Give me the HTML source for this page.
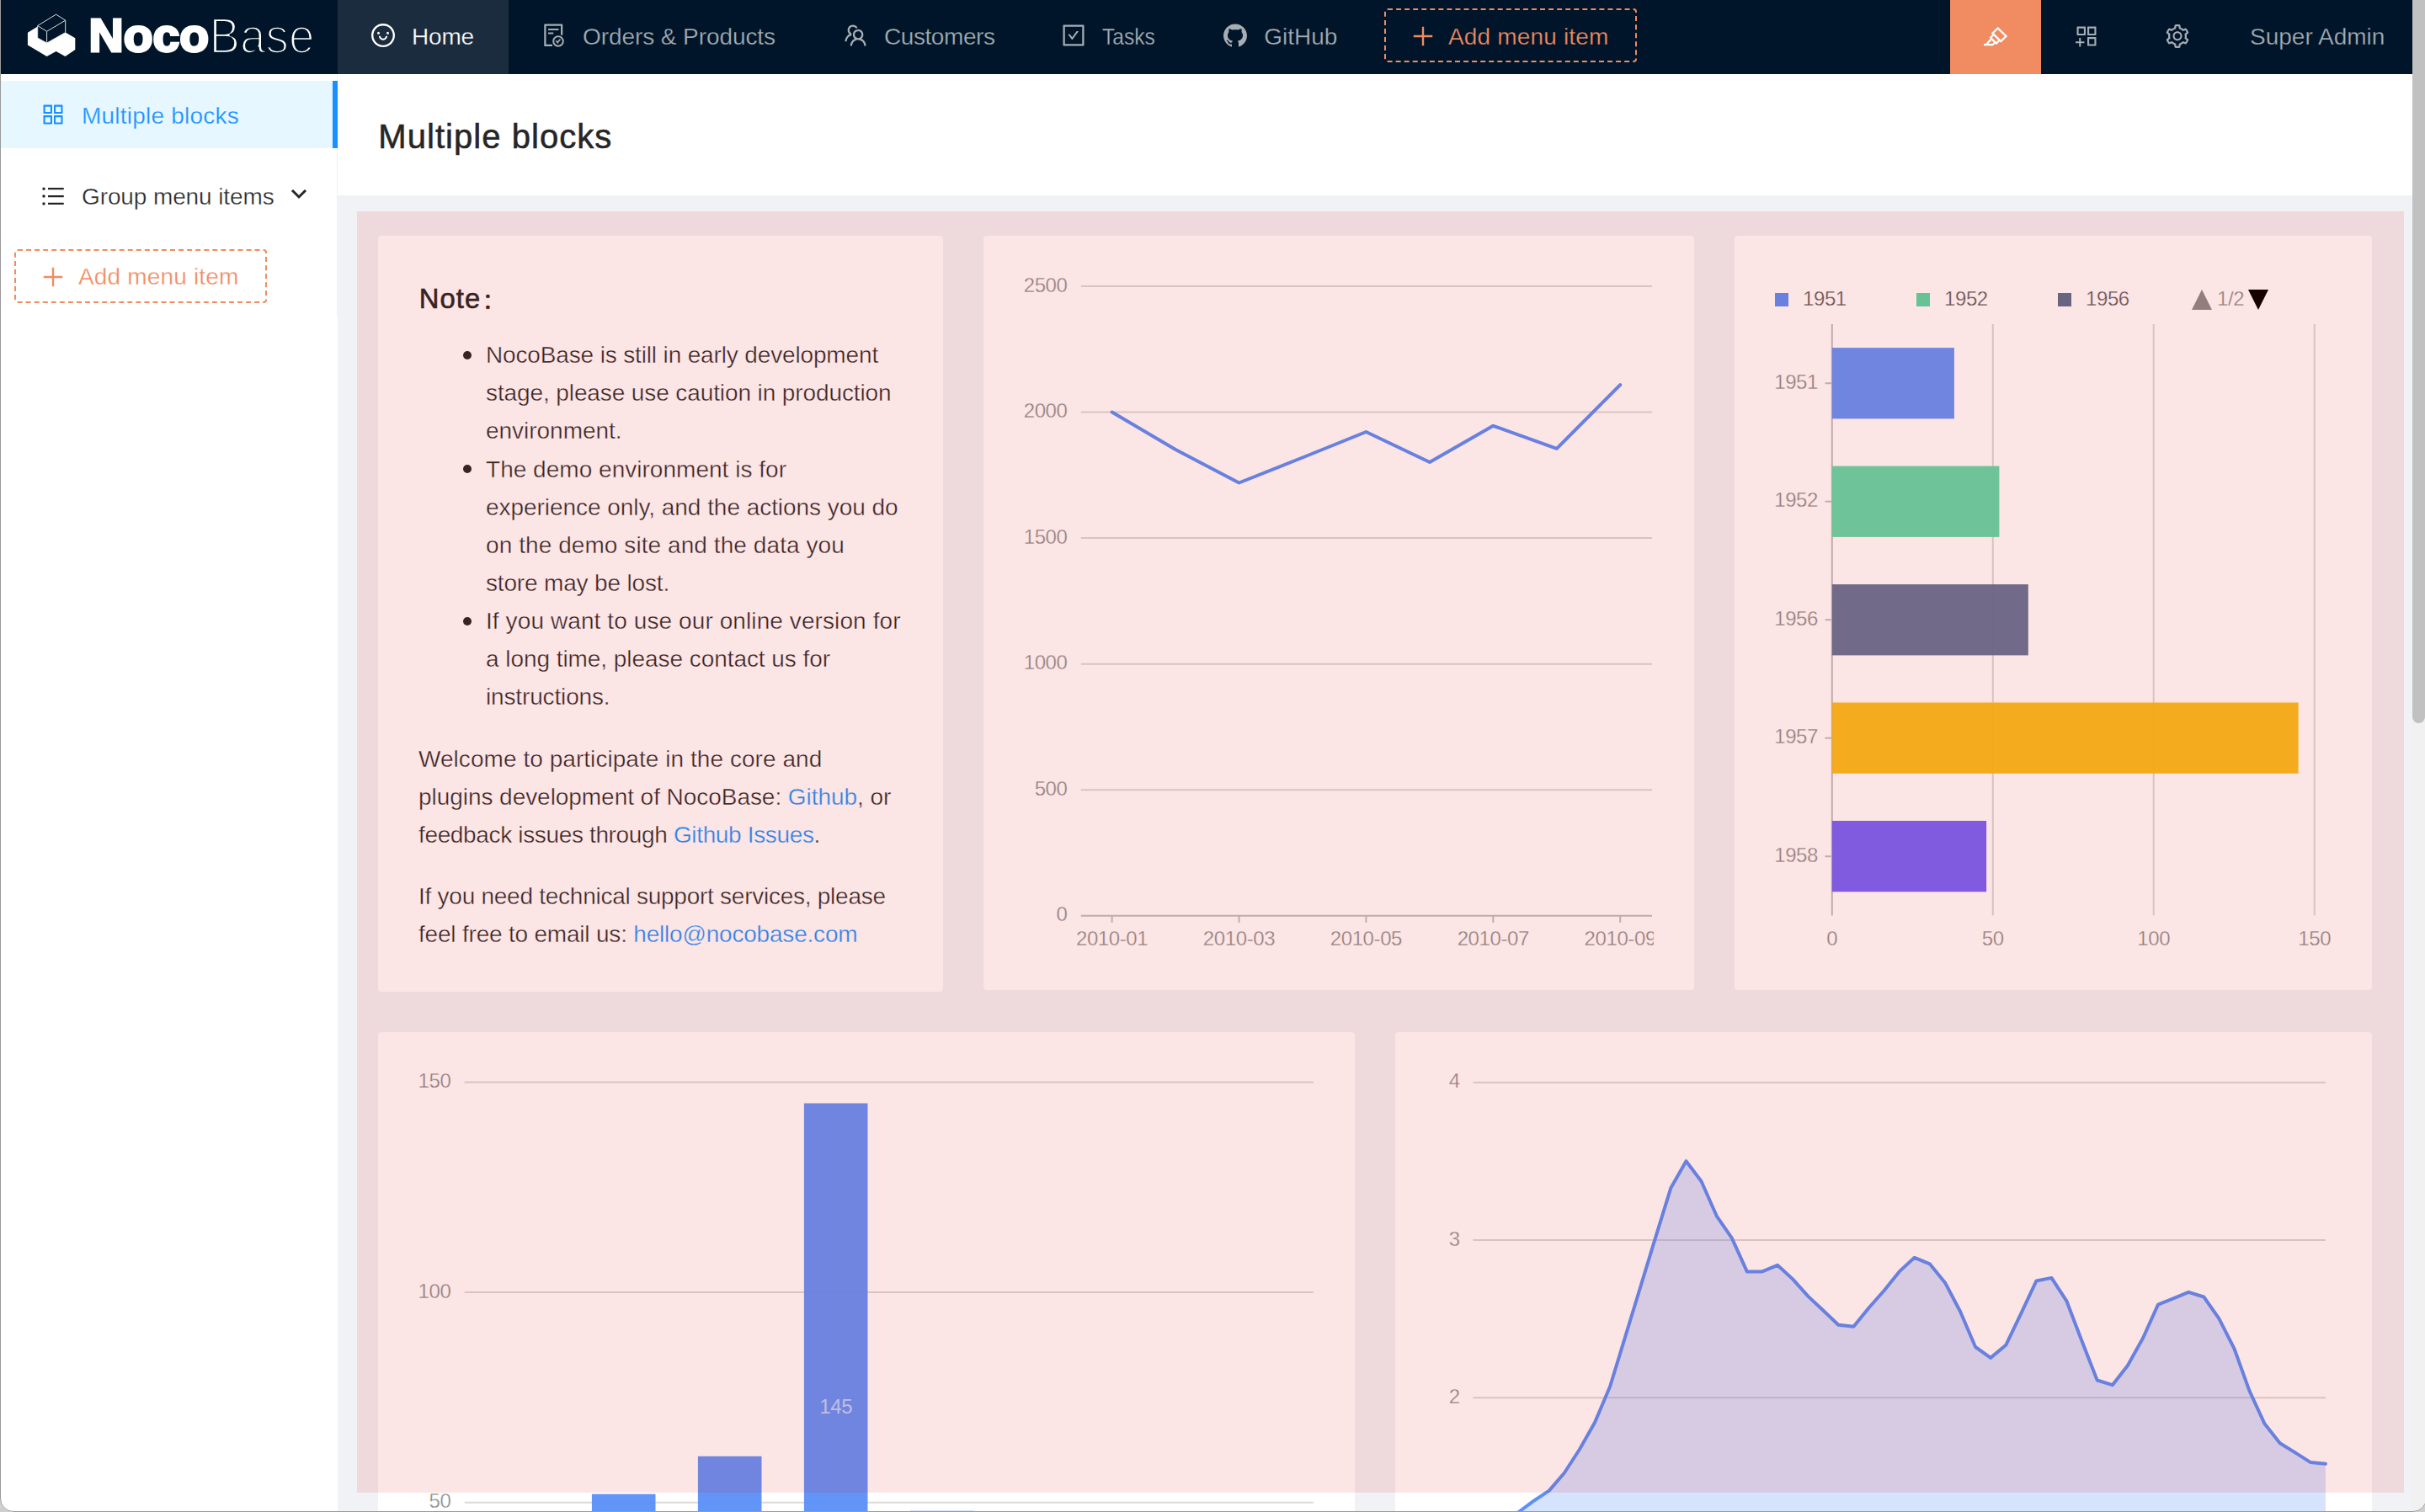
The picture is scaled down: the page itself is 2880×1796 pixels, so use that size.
<!DOCTYPE html>
<html lang="en">
<head>
<meta charset="utf-8">
<title>NocoBase</title>
<style>
html,body{margin:0;padding:0;}
body{width:2880px;height:1796px;overflow:hidden;position:relative;background:#f0f2f5;font-family:"Liberation Sans","Noto Sans CJK SC",sans-serif;font-size:28px;color:rgba(0,0,0,.85);-webkit-font-smoothing:antialiased;}
*{box-sizing:border-box;}
svg{display:block;}
.abs{position:absolute;}
/* header */
#hdr{position:absolute;left:0;top:0;width:2865px;height:88px;background:#001529;}
.mi{position:absolute;top:0;height:88px;color:#a6adb4;white-space:nowrap;}
.mi svg{position:absolute;top:28px;width:28px;height:28px;fill:currentColor;}
.mi span{-webkit-text-stroke:0.3px #001529;position:absolute;top:0;line-height:88px;font-size:28px;}
.mi.sel{background:#1a2c3e;color:#fff;}
.mi.sel span{-webkit-text-stroke:0.3px #1a2c3e;}
.addbtn{position:absolute;width:300px;height:64px;border:2px dashed #f18b62;border-radius:4px;color:#f18b62;white-space:nowrap;}
.addbtn svg{position:absolute;left:30px;top:17px;width:28px;height:28px;fill:currentColor;}
.addbtn span{position:absolute;left:74px;top:1px;line-height:60px;font-size:28px;}
/* sider */
#sider{position:absolute;left:1px;top:88px;width:400px;height:1708px;background:#fff;}
.smi{position:absolute;left:0;width:400px;height:80px;white-space:nowrap;}
.smi svg.ic{position:absolute;left:48px;top:26px;width:28px;height:28px;fill:currentColor;}
.smi span{-webkit-text-stroke:0.3px #fff;position:absolute;left:96px;top:2px;line-height:80px;font-size:28px;}
/* main */
#title{position:absolute;left:401px;top:88px;width:2464px;height:144px;background:#fff;}
#title h1{position:absolute;left:48.3px;top:2.1px;margin:0;font-size:40px;font-weight:400;line-height:144px;color:#262626;-webkit-text-stroke:0.55px #262626;white-space:nowrap;}
.card{position:absolute;background:#fff;border-radius:4px;overflow:hidden;}
.cl{stroke:#fff;stroke-width:.3px;font-size:24px;fill:#8c8c8c;font-family:"Liberation Sans",sans-serif;letter-spacing:-0.4px;}
.lg{fill:#595959;}
#ov{position:absolute;left:424px;top:251px;width:2431px;height:1522px;background:rgba(228,0,0,.1);}
/* markdown */
#md{position:absolute;left:48px;top:48px;width:600px;font-size:28px;line-height:45.14px;color:rgba(0,0,0,.85);white-space:nowrap;}
#md h3{height:54.6px;position:relative;top:0.4px;margin:0 0 16.6px 0;font-size:32.76px;font-weight:400;line-height:54.6px;letter-spacing:1.1px;padding-left:0.8px;color:#262626;-webkit-text-stroke:0.6px #262626;}
#md ul,#md p{-webkit-text-stroke:0.35px #fff;}
#md ul{margin:0 0 28px 0;padding:0 0 0 80px;list-style:none;}
#md li{position:relative;}
#md li:before{content:"";position:absolute;left:-27.2px;top:17.4px;width:10.4px;height:10.4px;border-radius:50%;background:rgba(0,0,0,.85);}
#md p{margin:0 0 28px 0;}
#md a{color:#1890ff;text-decoration:none;}
.ln{display:inline-block;}
</style>
</head>
<body>
<!-- HEADER -->
<div id="hdr">
<svg class="abs" style="left:0;top:0" width="401" height="88" viewBox="0 0 401 88">
<polygon fill="#fff" points="32.9,38.8 44.7,31.6 44.7,45 55.6,51.1 77.7,38.6 89.3,45.2 89.3,59 77.5,67 66.6,60.9 55.6,67 32.9,53.4"/>
<g fill="none" stroke="#d8dce0" stroke-width="1" stroke-linejoin="round"><polygon points="44.7,30.5 66.6,17.1 77.7,24.2 77.7,38.6 55.6,51.1 44.7,45"/><polyline points="44.7,30.5 55.6,37.3 77.7,24.2"/><line x1="55.6" y1="37.3" x2="55.6" y2="51.1"/></g>
<text x="105.5" y="60.6" font-family="Liberation Sans, sans-serif" font-weight="700" font-size="56" fill="#fff" stroke="#fff" stroke-width="3" textLength="142.5" lengthAdjust="spacingAndGlyphs">Noco</text>
<text x="248.5" y="63.2" font-family="Liberation Sans, sans-serif" font-weight="400" font-size="60" fill="#fff" stroke="#001529" stroke-width="2.7" textLength="125" lengthAdjust="spacingAndGlyphs">Base</text>
</svg>
<div class="mi sel" style="left:401px;width:203px"><svg style="left:40px" viewBox="64 64 896 896"><path d="M288 421a48 48 0 1096 0 48 48 0 10-96 0zm352 0a48 48 0 1096 0 48 48 0 10-96 0zM512 64C264.600 64 64 264.600 64 512s200.600 448 448 448 448-200.600 448-448S759.400 64 512 64zm263 711c-34.200 34.200-74 61-118.300 79.800C611 874.200 562.300 884 512 884c-50.300 0-99-9.800-144.800-29.200A370.400 370.400 0 01248.900 775c-34.200-34.200-61-74-79.800-118.300C149.800 611 140 562.300 140 512s9.800-99 29.200-144.800A370.400 370.400 0 01249 248.900c34.200-34.200 74-61 118.300-79.800C413 149.800 461.700 140 512 140c50.300 0 99 9.800 144.800 29.200A370.400 370.400 0 01775.100 249c34.200 34.200 61 74 79.800 118.300C874.200 413 884 461.700 884 512s-9.800 99-29.200 144.800A368.890 368.890 0 01775 775zM664 533h-48.100c-4.200 0-7.800 3.200-8.100 7.400C604 589.900 562.500 629 512 629s-92.100-39.100-95.800-88.600c-.3-4.200-3.900-7.400-8.100-7.400H360a8 8 0 00-8 8.400c4.400 84.300 74.500 151.600 160 151.600s155.600-67.300 160-151.600a8 8 0 00-8-8.400z"/></svg><span style="left:88px;letter-spacing:-0.18px">Home</span></div>
<div class="mi" style="left:604px;width:358px"><svg style="left:40px" viewBox="64 64 896 896"><path d="M688 312v-48c0-4.400-3.600-8-8-8H296c-4.400 0-8 3.600-8 8v48c0 4.400 3.600 8 8 8h384c4.400 0 8-3.600 8-8zm-392 88c-4.400 0-8 3.600-8 8v48c0 4.400 3.600 8 8 8h184c4.400 0 8-3.600 8-8v-48c0-4.400-3.600-8-8-8H296zm376 116c-119.300 0-216 96.700-216 216s96.700 216 216 216 216-96.700 216-216-96.700-216-216-216zm107.500 323.500C750.800 868.200 712.600 884 672 884s-78.800-15.800-107.500-44.500C535.800 810.800 520 772.600 520 732s15.800-78.800 44.500-107.500C593.200 595.800 631.400 580 672 580s78.800 15.800 107.500 44.500C808.200 653.200 824 691.400 824 732s-15.800 78.800-44.500 107.500zM761 656h-44.300c-2.600 0-5 1.200-6.500 3.300l-63.500 87.800-23.100-31.900a7.920 7.920 0 00-6.500-3.300H573c-6.500 0-10.300 7.400-6.500 12.700l73.800 102.100c3.200 4.400 9.700 4.400 12.900 0l114.200-158c3.900-5.300.1-12.700-6.400-12.700zM440 852H208V148h560v344c0 4.400 3.600 8 8 8h56c4.400 0 8-3.600 8-8V108c0-17.700-14.300-32-32-32H168c-17.700 0-32 14.300-32 32v784c0 17.700 14.300 32 32 32h272c4.400 0 8-3.600 8-8v-56c0-4.400-3.600-8-8-8z"/></svg><span style="left:88px;letter-spacing:-0.08px">Orders &amp; Products</span></div>
<div class="mi" style="left:962px;width:259px"><svg style="left:40px" viewBox="64 64 896 896"><path d="M824.200 699.900a301.550 301.550 0 00-86.400-60.400C783.100 602.800 812 546.800 812 484c0-110.800-92.400-201.700-203.200-200-109.100 1.700-197 90.600-197 200 0 62.800 29 118.800 74.200 155.500a300.950 300.950 0 00-86.400 60.400C345 754.600 314 826.800 312 903.800a8 8 0 008 8.200h56c4.300 0 7.900-3.400 8-7.700 1.900-58 25.400-112.300 66.700-153.500A226.620 226.620 0 01612 684c60.900 0 118.200 23.700 161.300 66.800C814.500 792 838 846.300 840 904.300c.1 4.300 3.700 7.700 8 7.700h56a8 8 0 008-8.200c-2-77-33-149.200-87.800-203.900zM612 612c-34.200 0-66.400-13.300-90.500-37.500a126.860 126.860 0 01-37.500-91.800c.3-32.800 13.400-64.500 36.300-88 24-24.600 56.100-38.300 90.400-38.700 33.900-.3 66.800 12.900 91 36.600 24.800 24.300 38.400 56.800 38.400 91.400 0 34.200-13.300 66.300-37.500 90.500A127.300 127.300 0 01612 612zM361.500 510.400c-.9-8.700-1.400-17.500-1.400-26.400 0-15.900 1.500-31.400 4.300-46.500.7-3.600-1.200-7.300-4.500-8.800-13.600-6.100-26.100-14.500-36.900-25.100a127.540 127.540 0 01-38.700-95.400c.9-32.100 13.800-62.600 36.300-85.600 24.700-25.300 57.900-39.100 93.200-38.700 31.900.3 62.700 12.600 86 34.400 7.900 7.400 14.700 15.600 20.400 24.400 2 3.100 5.900 4.400 9.300 3.200 17.600-6.100 36.200-10.400 55.300-12.400 5.600-.6 8.800-6.600 6.300-11.600-32.500-64.300-98.900-108.700-175.700-109.900-110.900-1.700-203.300 89.200-203.300 199.900 0 62.800 28.900 118.800 74.200 155.500-31.800 14.700-61.100 35-86.500 60.400-54.800 54.700-85.800 126.900-87.800 204a8 8 0 008 8.200h56.100c4.300 0 7.900-3.400 8-7.700 1.900-58 25.400-112.300 66.700-153.500 29.400-29.400 65.400-49.800 104.700-59.700 3.900-1 6.500-4.700 6-8.700z"/></svg><span style="left:88px;letter-spacing:-0.43px">Customers</span></div>
<div class="mi" style="left:1221px;width:191px"><svg style="left:40px" viewBox="64 64 896 896"><path d="M433.100 657.700a31.800 31.800 0 0051.700 0l210.600-292c3.800-5.300 0-12.700-6.500-12.700H642c-10.200 0-19.900 4.900-25.900 13.300L459 584.300l-71.200-98.800c-6-8.300-15.600-13.300-25.900-13.300H315c-6.500 0-10.300 7.400-6.500 12.700l124.600 172.800z"/><path d="M880 112H144c-17.700 0-32 14.300-32 32v736c0 17.700 14.300 32 32 32h736c17.700 0 32-14.300 32-32V144c0-17.700-14.300-32-32-32zm-40 728H184V184h656v656z"/></svg><span style="left:88px;letter-spacing:0px"><i style="display:inline-block;font-style:normal;transform:scaleX(.876);transform-origin:0 50%">Tasks</i></span></div>
<div class="mi" style="left:1413.3px;width:214.7px"><svg style="left:40px" viewBox="64 64 896 896"><path d="M511.600 76.300C264.300 76.200 64 276.400 64 523.500 64 718.900 189.300 885 363.800 946c23.500 5.900 19.900-10.800 19.900-22.200v-77.500c-135.700 15.900-141.200-73.900-150.300-88.900C215 726 171.500 718 184.500 703c30.900-15.900 62.400 4 98.900 57.900 26.400 39.100 77.900 32.500 104 26 5.700-23.500 17.900-44.500 34.700-60.800-140.600-25.200-199.200-111-199.200-213 0-49.500 16.300-95 48.300-131.700-20.400-60.500 1.900-112.300 4.900-120 58.100-5.200 118.500 41.600 123.200 45.300 33-8.900 70.700-13.600 112.900-13.600 42.400 0 80.200 4.900 113.500 13.900 11.300-8.600 67.300-48.800 121.300-43.900 2.900 7.700 24.700 58.300 5.500 118 32.400 36.800 48.900 82.700 48.900 132.300 0 102.200-59 188.100-200 212.900a127.500 127.500 0 0138.100 91v112.500c.8 9 0 17.900 15 17.900 177.100-59.700 304.600-227 304.600-424.100 0-247.200-200.400-447.300-447.500-447.300z"/></svg><span style="left:88px;letter-spacing:0px">GitHub</span></div>
<div class="addbtn" style="left:1644px;top:10px"><svg viewBox="64 64 896 896"><path d="M482 152h60q8 0 8 8v704q0 8-8 8h-60q-8 0-8-8V160q0-8 8-8z"/><path d="M192 474h672q8 0 8 8v60q0 8-8 8H160q-8 0-8-8v-60q0-8 8-8z"/></svg><span style="letter-spacing:0.17px;top:1.7px;-webkit-text-stroke:0.3px #001529">Add menu item</span></div>
<div class="abs" style="left:2316px;top:0;width:108px;height:88px;background:#f18b62"><svg style="position:absolute;left:40px;top:29px;width:28px;height:28px;fill:#fff" viewBox="64 64 896 896"><path d="M957.600 507.400L603.200 158.200a7.900 7.900 0 00-11.200 0L353.300 393.400a8.030 8.030 0 00-.1 11.300l.1.100 40 39.400-117.200 115.300a8.030 8.030 0 00-.1 11.300l.1.100 39.500 38.900-189.100 187H72.100c-4.400 0-8.100 3.600-8.100 8V860c0 4.400 3.600 8 8 8h344.900c2.100 0 4.100-.8 5.600-2.300l76.100-75.600 40.400 39.800a7.900 7.900 0 0011.200 0l117.100-115.600 40.100 39.500a7.900 7.900 0 0011.200 0l238.700-235.200c3.400-3 3.400-8 .3-11.200zM389.800 796.200H229.600l134.400-133 80.100 78.900-54.300 54.100zm154.800-62.100L373.200 565.200l68.600-67.600 171.400 168.900-68.600 67.600zM713.100 658L450.300 399.100 597.600 254l262.800 259-147.300 145z"/></svg></div>
<svg style="position:absolute;left:2464px;top:29px;width:28px;height:28px;fill:#a6adb4" viewBox="64 64 896 896"><path d="M464 144H160c-8.800 0-16 7.200-16 16v304c0 8.800 7.200 16 16 16h304c8.800 0 16-7.200 16-16V160c0-8.800-7.200-16-16-16zm-52 268H212V212h200v200zm452-268H560c-8.800 0-16 7.200-16 16v304c0 8.800 7.200 16 16 16h304c8.800 0 16-7.200 16-16V160c0-8.800-7.200-16-16-16zm-52 268H612V212h200v200zm52 132H560c-8.800 0-16 7.200-16 16v304c0 8.800 7.200 16 16 16h304c8.800 0 16-7.200 16-16V560c0-8.800-7.200-16-16-16zm-52 268H612V612h200v200zM424 712H296V584c0-4.400-3.600-8-8-8h-48c-4.400 0-8 3.600-8 8v128H104c-4.400 0-8 3.600-8 8v48c0 4.400 3.600 8 8 8h128v128c0 4.400 3.600 8 8 8h48c4.400 0 8-3.600 8-8V776h128c4.400 0 8-3.600 8-8v-48c0-4.400-3.600-8-8-8z"/></svg>
<svg style="position:absolute;left:2572px;top:29px;width:28px;height:28px;fill:#a6adb4" viewBox="64 64 896 896"><path d="M924.800 625.700l-65.500-56c3.100-19 4.700-38.400 4.700-57.800s-1.600-38.800-4.700-57.800l65.500-56a32.030 32.030 0 009.300-35.200l-.9-2.600a442.740 442.740 0 00-79.700-137.900l-1.800-2.100a32.120 32.120 0 00-35.100-9.500l-81.300 28.900c-30-24.600-63.500-44-99.700-57.600l-15.700-85a32.050 32.050 0 00-25.800-25.700l-2.700-.5c-52.100-9.400-106.900-9.400-159 0l-2.700.5a32.050 32.050 0 00-25.800 25.700l-15.800 85.400a351.860 351.860 0 00-99 57.400l-81.900-29.100a32 32 0 00-35.100 9.500l-1.800 2.100a446.020 446.020 0 00-79.700 137.900l-.9 2.600c-4.500 12.500-.8 26.500 9.300 35.200l66.300 56.600c-3.100 18.800-4.600 38-4.600 57.100 0 19.200 1.500 38.400 4.600 57.100L99 625.500a32.030 32.030 0 00-9.300 35.200l.9 2.600c18.100 50.400 44.900 96.900 79.700 137.900l1.800 2.100a32.120 32.120 0 0035.100 9.500l81.900-29.100c29.800 24.500 63.100 43.900 99 57.400l15.800 85.400a32.050 32.050 0 0025.800 25.700l2.700.5a449.400 449.400 0 00159 0l2.700-.5a32.050 32.050 0 0025.800-25.700l15.700-85a350 350 0 0099.700-57.600l81.300 28.900a32 32 0 0035.100-9.500l1.800-2.100c34.800-41.100 61.600-87.500 79.700-137.900l.9-2.600c4.500-12.300.8-26.300-9.300-35zM788.300 465.900c2.500 15.100 3.800 30.600 3.800 46.100s-1.300 31-3.800 46.100l-6.600 40.100 74.700 63.900a370.030 370.030 0 01-42.600 73.600L721 702.800l-31.400 25.800c-23.900 19.600-50.500 35-79.300 45.800l-38.100 14.300-17.900 97a377.500 377.500 0 01-85 0l-17.900-97.200-37.800-14.500c-28.500-10.800-55-26.200-78.700-45.700l-31.400-25.900-93.400 33.200c-17-22.900-31.200-47.600-42.600-73.600l75.500-64.500-6.500-40c-2.400-14.900-3.700-30.300-3.700-45.500 0-15.300 1.200-30.600 3.700-45.500l6.500-40-75.500-64.500c11.300-26.100 25.600-50.700 42.600-73.600l93.400 33.200 31.400-25.900c23.700-19.500 50.200-34.900 78.700-45.700l37.900-14.300 17.900-97.200c28.100-3.200 56.800-3.200 85 0l17.900 97 38.100 14.300c28.700 10.800 55.400 26.200 79.300 45.800l31.400 25.800 92.800-32.900c17 22.900 31.200 47.600 42.600 73.600L781.800 426l6.500 39.900zM512 326c-97.200 0-176 78.800-176 176s78.800 176 176 176 176-78.800 176-176-78.800-176-176-176zm79.200 255.200A111.600 111.600 0 01512 614c-29.900 0-58-11.700-79.200-32.800A111.600 111.600 0 01400 502c0-29.900 11.700-58 32.800-79.200C454 401.600 482.100 390 512 390c29.900 0 58 11.600 79.200 32.800A111.600 111.600 0 01624 502c0 29.900-11.700 58-32.800 79.200z"/></svg>
<span class="abs" style="left:2672px;top:0;line-height:88px;font-size:28px;color:#a6adb4;white-space:nowrap;-webkit-text-stroke:0.3px #001529">Super Admin</span>
</div>
<!-- TITLE -->
<div id="title"><h1 style="letter-spacing:1.05px">Multiple blocks</h1></div>
<!-- SIDER -->
<div id="sider">
<div class="abs" style="left:399px;top:0;width:1px;height:288px;background:#f0f0f0"></div>
<div class="smi" style="top:8px;background:#e6f7ff;color:#1890ff;border-right:6px solid #1890ff"><svg class="ic" viewBox="64 64 896 896"><path d="M464 144H160c-8.800 0-16 7.200-16 16v304c0 8.800 7.200 16 16 16h304c8.800 0 16-7.200 16-16V160c0-8.800-7.200-16-16-16zm-52 268H212V212h200v200zm452-268H560c-8.800 0-16 7.200-16 16v304c0 8.800 7.200 16 16 16h304c8.800 0 16-7.200 16-16V160c0-8.800-7.200-16-16-16zm-52 268H612V212h200v200zM464 544H160c-8.800 0-16 7.200-16 16v304c0 8.800 7.200 16 16 16h304c8.800 0 16-7.200 16-16V560c0-8.800-7.200-16-16-16zm-52 268H212V612h200v200zm452-268H560c-8.800 0-16 7.200-16 16v304c0 8.800 7.200 16 16 16h304c8.800 0 16-7.200 16-16V560c0-8.800-7.200-16-16-16zm-52 268H612V612h200v200z"/></svg><span style="letter-spacing:0.22px;-webkit-text-stroke-color:#e6f7ff">Multiple blocks</span></div>
<div class="smi" style="top:105px;color:rgba(0,0,0,.85)"><svg class="ic" viewBox="64 64 896 896"><path d="M912 192H328c-4.400 0-8 3.600-8 8v56c0 4.400 3.600 8 8 8h584c4.400 0 8-3.600 8-8v-56c0-4.400-3.600-8-8-8zm0 284H328c-4.400 0-8 3.600-8 8v56c0 4.400 3.600 8 8 8h584c4.400 0 8-3.600 8-8v-56c0-4.400-3.600-8-8-8zm0 284H328c-4.400 0-8 3.600-8 8v56c0 4.400 3.600 8 8 8h584c4.400 0 8-3.600 8-8v-56c0-4.400-3.600-8-8-8zM104 228a56 56 0 10112 0 56 56 0 10-112 0zm0 284a56 56 0 10112 0 56 56 0 10-112 0zm0 284a56 56 0 10112 0 56 56 0 10-112 0z"/></svg><span style="letter-spacing:-0.11px;top:1px">Group menu items</span><svg class="abs" style="left:343px;top:29px" width="22" height="16" viewBox="0 0 22 16"><polyline points="3,4 11,12 19,4" fill="none" stroke="rgba(0,0,0,.85)" stroke-width="3"/></svg></div>
<div class="addbtn" style="left:16px;top:208px"><svg viewBox="64 64 896 896"><path d="M482 152h60q8 0 8 8v704q0 8-8 8h-60q-8 0-8-8V160q0-8 8-8z"/><path d="M192 474h672q8 0 8 8v60q0 8-8 8H160q-8 0-8-8v-60q0-8 8-8z"/></svg><span style="letter-spacing:0.17px;-webkit-text-stroke:0.3px #fff">Add menu item</span></div>
</div>
<!-- CARDS -->
<div id="cards">
<div class="card" style="left:449px;top:280px;width:671px;height:898px">
<div id="md">
<h3>Note<span style="position:relative;top:-0.6px;left:1.7px;font-size:25.5px;line-height:0">：</span></h3>
<ul>
<li><span class="ln" style="letter-spacing:-0.146px">NocoBase is still in early development</span><br><span class="ln" style="letter-spacing:-0.107px">stage, please use caution in production</span><br><span class="ln" style="letter-spacing:-0.023px">environment.</span></li>
<li><span class="ln" style="letter-spacing:0.023px">The demo environment is for</span><br><span class="ln" style="letter-spacing:-0.046px">experience only, and the actions you do</span><br><span class="ln" style="letter-spacing:0.075px">on the demo site and the data you</span><br><span class="ln" style="letter-spacing:-0.166px">store may be lost.</span></li>
<li><span class="ln" style="letter-spacing:0.095px">If you want to use our online version for</span><br><span class="ln" style="letter-spacing:-0.056px">a long time, please contact us for</span><br><span class="ln" style="letter-spacing:-0.147px">instructions.</span></li>
</ul>
<p><span class="ln" style="letter-spacing:0.052px">Welcome to participate in the core and</span><br><span class="ln" style="letter-spacing:-0.05px">plugins development of NocoBase: <a>Github</a>, or</span><br><span class="ln" style="letter-spacing:-0.35px">feedback issues through <a>Github Issues</a>.</span></p>
<p><span class="ln" style="letter-spacing:-0.256px">If you need technical support services, please</span><br><span class="ln" style="letter-spacing:-0.2px">feel free to email us: <a>hello@nocobase.com</a></span></p>
</div></div>
<div class="card" style="left:1168px;top:280px;width:844px;height:896px">
<svg width="844" height="896" viewBox="0 0 844 896">
<defs><clipPath id="c2"><rect x="48" y="0" width="748" height="896"/></clipPath></defs><g clip-path="url(#c2)">
<line x1="115.8" x2="794" y1="60.00" y2="60.00" stroke="#d9d9d9" stroke-width="2"/>
<text class="cl" x="99.5" y="66.6" text-anchor="end">2500</text>
<line x1="115.8" x2="794" y1="209.55" y2="209.55" stroke="#d9d9d9" stroke-width="2"/>
<text class="cl" x="99.5" y="216.2" text-anchor="end">2000</text>
<line x1="115.8" x2="794" y1="359.10" y2="359.10" stroke="#d9d9d9" stroke-width="2"/>
<text class="cl" x="99.5" y="365.7" text-anchor="end">1500</text>
<line x1="115.8" x2="794" y1="508.65" y2="508.65" stroke="#d9d9d9" stroke-width="2"/>
<text class="cl" x="99.5" y="515.2" text-anchor="end">1000</text>
<line x1="115.8" x2="794" y1="658.20" y2="658.20" stroke="#d9d9d9" stroke-width="2"/>
<text class="cl" x="99.5" y="664.8" text-anchor="end">500</text>
<line x1="115.8" x2="794" y1="807.75" y2="807.75" stroke="#bfbfbf" stroke-width="2"/>
<text class="cl" x="99.5" y="814.4" text-anchor="end">0</text>
<line x1="152.6" x2="152.6" y1="807.8" y2="815.8" stroke="#bfbfbf" stroke-width="2"/>
<text class="cl" x="152.6" y="842.8" text-anchor="middle">2010-01</text>
<line x1="303.5" x2="303.5" y1="807.8" y2="815.8" stroke="#bfbfbf" stroke-width="2"/>
<text class="cl" x="303.5" y="842.8" text-anchor="middle">2010-03</text>
<line x1="454.4" x2="454.4" y1="807.8" y2="815.8" stroke="#bfbfbf" stroke-width="2"/>
<text class="cl" x="454.4" y="842.8" text-anchor="middle">2010-05</text>
<line x1="605.3" x2="605.3" y1="807.8" y2="815.8" stroke="#bfbfbf" stroke-width="2"/>
<text class="cl" x="605.3" y="842.8" text-anchor="middle">2010-07</text>
<line x1="756.2" x2="756.2" y1="807.8" y2="815.8" stroke="#bfbfbf" stroke-width="2"/>
<text class="cl" x="756.2" y="842.8" text-anchor="middle">2010-09</text>
<polyline points="152.6,209.5 228.1,254.0 303.5,293.5 379.0,263.5 454.4,233.0 529.9,269.0 605.3,225.8 680.8,252.8 756.2,177.2" fill="none" stroke="#5B8FF9" stroke-width="4" stroke-linejoin="round" stroke-linecap="round"/>
</g></svg></div>
<div class="card" style="left:2060px;top:280px;width:757px;height:896px">
<svg width="757" height="896" viewBox="0 0 757 896">
<rect x="48" y="68" width="16" height="16" fill="#5B8FF9"/>
<text class="cl lg" x="81" y="83" text-anchor="start">1951</text>
<rect x="216" y="68" width="16" height="16" fill="#5AD8A6"/>
<text class="cl lg" x="249" y="83" text-anchor="start">1952</text>
<rect x="384" y="68" width="16" height="16" fill="#5D7092"/>
<text class="cl lg" x="417" y="83" text-anchor="start">1956</text>
<polygon points="543,88 555,64 567,88" fill="#000" fill-opacity=".45"/>
<text class="cl" x="573" y="83" text-anchor="start" style="fill:#8c8c8c">1/2</text>
<polygon points="610,64 634,64 622,88" fill="#000"/>
<line x1="115.8" x2="115.8" y1="105" y2="807.4" stroke="#bfbfbf" stroke-width="2"/>
<text class="cl" x="115.8" y="842.8" text-anchor="middle">0</text>
<line x1="306.8" x2="306.8" y1="105" y2="807.4" stroke="#d9d9d9" stroke-width="2"/>
<text class="cl" x="306.8" y="842.8" text-anchor="middle">50</text>
<line x1="497.7" x2="497.7" y1="105" y2="807.4" stroke="#d9d9d9" stroke-width="2"/>
<text class="cl" x="497.7" y="842.8" text-anchor="middle">100</text>
<line x1="688.7" x2="688.7" y1="105" y2="807.4" stroke="#d9d9d9" stroke-width="2"/>
<text class="cl" x="688.7" y="842.8" text-anchor="middle">150</text>
<rect x="115.8" y="133.1" width="145.1" height="84.3" fill="#5B8FF9" fill-opacity=".95"/>
<line x1="107.5" x2="115.8" y1="175.2" y2="175.2" stroke="#bfbfbf" stroke-width="2"/>
<text class="cl" x="99" y="181.8" text-anchor="end">1951</text>
<rect x="115.8" y="273.6" width="198.6" height="84.3" fill="#5AD8A6" fill-opacity=".95"/>
<line x1="107.5" x2="115.8" y1="315.7" y2="315.7" stroke="#bfbfbf" stroke-width="2"/>
<text class="cl" x="99" y="322.3" text-anchor="end">1952</text>
<rect x="115.8" y="414.1" width="233.0" height="84.3" fill="#5D7092" fill-opacity=".95"/>
<line x1="107.5" x2="115.8" y1="456.2" y2="456.2" stroke="#bfbfbf" stroke-width="2"/>
<text class="cl" x="99" y="462.8" text-anchor="end">1956</text>
<rect x="115.8" y="554.5" width="553.8" height="84.3" fill="#F6BD16" fill-opacity=".95"/>
<line x1="107.5" x2="115.8" y1="596.7" y2="596.7" stroke="#bfbfbf" stroke-width="2"/>
<text class="cl" x="99" y="603.3" text-anchor="end">1957</text>
<rect x="115.8" y="695.0" width="183.3" height="84.3" fill="#6F5EF9" fill-opacity=".95"/>
<line x1="107.5" x2="115.8" y1="737.2" y2="737.2" stroke="#bfbfbf" stroke-width="2"/>
<text class="cl" x="99" y="743.8" text-anchor="end">1958</text>
</svg></div>
<div class="card" style="left:449px;top:1226px;width:1160px;height:896px">
<svg width="1160" height="896" viewBox="0 0 1160 896">
<line x1="102.7" x2="1110.8" y1="59.50" y2="59.50" stroke="#d9d9d9" stroke-width="2"/>
<text class="cl" x="86.4" y="66.1" text-anchor="end">150</text>
<line x1="102.7" x2="1110.8" y1="309.10" y2="309.10" stroke="#d9d9d9" stroke-width="2"/>
<text class="cl" x="86.4" y="315.7" text-anchor="end">100</text>
<line x1="102.7" x2="1110.8" y1="558.70" y2="558.70" stroke="#d9d9d9" stroke-width="2"/>
<text class="cl" x="86.4" y="565.3" text-anchor="end">50</text>
<line x1="102.7" x2="1110.8" y1="808.30" y2="808.30" stroke="#bfbfbf" stroke-width="2"/>
<text class="cl" x="86.4" y="814.9" text-anchor="end">0</text>
<rect x="127.9" y="618.6" width="75.6" height="189.7" fill="#5B8FF9" fill-opacity=".95"/>
<text x="165.7" y="720.5" text-anchor="middle" font-size="24" letter-spacing="-0.4" fill="#fff" fill-opacity=".6" font-family="Liberation Sans, sans-serif">38</text>
<rect x="253.9" y="548.7" width="75.6" height="259.6" fill="#5B8FF9" fill-opacity=".95"/>
<text x="291.7" y="685.5" text-anchor="middle" font-size="24" letter-spacing="-0.4" fill="#fff" fill-opacity=".6" font-family="Liberation Sans, sans-serif">52</text>
<rect x="379.9" y="503.8" width="75.6" height="304.5" fill="#5B8FF9" fill-opacity=".95"/>
<text x="417.7" y="663.0" text-anchor="middle" font-size="24" letter-spacing="-0.4" fill="#fff" fill-opacity=".6" font-family="Liberation Sans, sans-serif">61</text>
<rect x="505.9" y="84.5" width="75.6" height="723.8" fill="#5B8FF9" fill-opacity=".95"/>
<text x="543.7" y="453.4" text-anchor="middle" font-size="24" letter-spacing="-0.4" fill="#fff" fill-opacity=".6" font-family="Liberation Sans, sans-serif">145</text>
<rect x="632.0" y="568.7" width="75.6" height="239.6" fill="#5B8FF9" fill-opacity=".95"/>
<text x="669.8" y="695.5" text-anchor="middle" font-size="24" letter-spacing="-0.4" fill="#fff" fill-opacity=".6" font-family="Liberation Sans, sans-serif">48</text>
<rect x="758.0" y="608.6" width="75.6" height="199.7" fill="#5B8FF9" fill-opacity=".95"/>
<text x="795.8" y="715.5" text-anchor="middle" font-size="24" letter-spacing="-0.4" fill="#fff" fill-opacity=".6" font-family="Liberation Sans, sans-serif">40</text>
<rect x="884.0" y="658.5" width="75.6" height="149.8" fill="#5B8FF9" fill-opacity=".95"/>
<text x="921.8" y="740.4" text-anchor="middle" font-size="24" letter-spacing="-0.4" fill="#fff" fill-opacity=".6" font-family="Liberation Sans, sans-serif">30</text>
<rect x="1010.0" y="683.5" width="75.6" height="124.8" fill="#5B8FF9" fill-opacity=".95"/>
<text x="1047.8" y="752.9" text-anchor="middle" font-size="24" letter-spacing="-0.4" fill="#fff" fill-opacity=".6" font-family="Liberation Sans, sans-serif">25</text>
</svg></div>
<div class="card" style="left:1657px;top:1226px;width:1160px;height:896px">
<svg width="1160" height="896" viewBox="0 0 1160 896">
<line x1="92.4" x2="1104.9" y1="59.80" y2="59.80" stroke="#d9d9d9" stroke-width="2"/>
<text class="cl" x="76.6" y="66.4" text-anchor="end">4</text>
<line x1="92.4" x2="1104.9" y1="247.00" y2="247.00" stroke="#d9d9d9" stroke-width="2"/>
<text class="cl" x="76.6" y="253.6" text-anchor="end">3</text>
<line x1="92.4" x2="1104.9" y1="434.20" y2="434.20" stroke="#d9d9d9" stroke-width="2"/>
<text class="cl" x="76.6" y="440.8" text-anchor="end">2</text>
<line x1="92.4" x2="1104.9" y1="621.40" y2="621.40" stroke="#d9d9d9" stroke-width="2"/>
<text class="cl" x="76.6" y="628.0" text-anchor="end">1</text>
<line x1="92.4" x2="1104.9" y1="808.60" y2="808.60" stroke="#bfbfbf" stroke-width="2"/>
<text class="cl" x="76.6" y="815.2" text-anchor="end">0</text>
<polygon points="92.4,808.6 92.4,593.5 110.5,587.5 128.6,579.9 146.6,570.0 164.7,556.7 182.8,544.6 200.9,523.5 219.0,495.5 237.0,463.8 255.1,421.0 273.2,361.9 291.3,302.5 309.4,243.1 327.4,184.9 345.5,153.2 363.6,177.3 381.7,218.3 399.8,244.6 417.8,284.4 435.9,284.4 454.0,276.8 472.1,293.4 490.2,313.6 508.2,330.5 526.3,347.7 544.4,349.8 562.5,327.5 580.6,307.0 598.7,284.4 616.7,267.8 634.8,275.3 652.9,297.4 671.0,331.7 689.1,374.0 707.1,386.9 725.2,371.8 743.3,334.1 761.4,295.5 779.5,291.9 797.5,319.7 815.6,367.3 833.7,413.5 851.8,419.2 869.9,396.0 887.9,363.7 906.0,323.6 924.1,316.4 942.2,308.8 960.3,314.5 978.3,340.2 996.4,375.8 1014.5,426.1 1032.6,465.3 1050.7,488.2 1068.7,499.4 1086.8,510.9 1104.9,512.7 1104.9,808.6" fill="#5B8FF9" fill-opacity=".25"/>
<polyline points="92.4,593.5 110.5,587.5 128.6,579.9 146.6,570.0 164.7,556.7 182.8,544.6 200.9,523.5 219.0,495.5 237.0,463.8 255.1,421.0 273.2,361.9 291.3,302.5 309.4,243.1 327.4,184.9 345.5,153.2 363.6,177.3 381.7,218.3 399.8,244.6 417.8,284.4 435.9,284.4 454.0,276.8 472.1,293.4 490.2,313.6 508.2,330.5 526.3,347.7 544.4,349.8 562.5,327.5 580.6,307.0 598.7,284.4 616.7,267.8 634.8,275.3 652.9,297.4 671.0,331.7 689.1,374.0 707.1,386.9 725.2,371.8 743.3,334.1 761.4,295.5 779.5,291.9 797.5,319.7 815.6,367.3 833.7,413.5 851.8,419.2 869.9,396.0 887.9,363.7 906.0,323.6 924.1,316.4 942.2,308.8 960.3,314.5 978.3,340.2 996.4,375.8 1014.5,426.1 1032.6,465.3 1050.7,488.2 1068.7,499.4 1086.8,510.9 1104.9,512.7" fill="none" stroke="#5B8FF9" stroke-width="4" stroke-linejoin="round" stroke-linecap="round"/>
</svg></div>
</div>
<!-- OVERLAY -->
<div id="ov"></div>
<!-- SCROLLBAR -->
<div class="abs" style="left:2865px;top:0;width:15px;height:1796px;background:#f1f1f1;"></div>
<div class="abs" style="left:2865px;top:-20px;width:15px;height:879px;background:#c1c1c1;border-radius:8px;"></div>
<!-- WINDOW FRAME -->
<div class="abs" style="left:0;top:-20px;width:2882px;height:1816px;border:1px solid #999;border-radius:0 0 16px 16px;box-shadow:0 0 0 30px #cfcfcf;pointer-events:none;"></div>
</body>
</html>
